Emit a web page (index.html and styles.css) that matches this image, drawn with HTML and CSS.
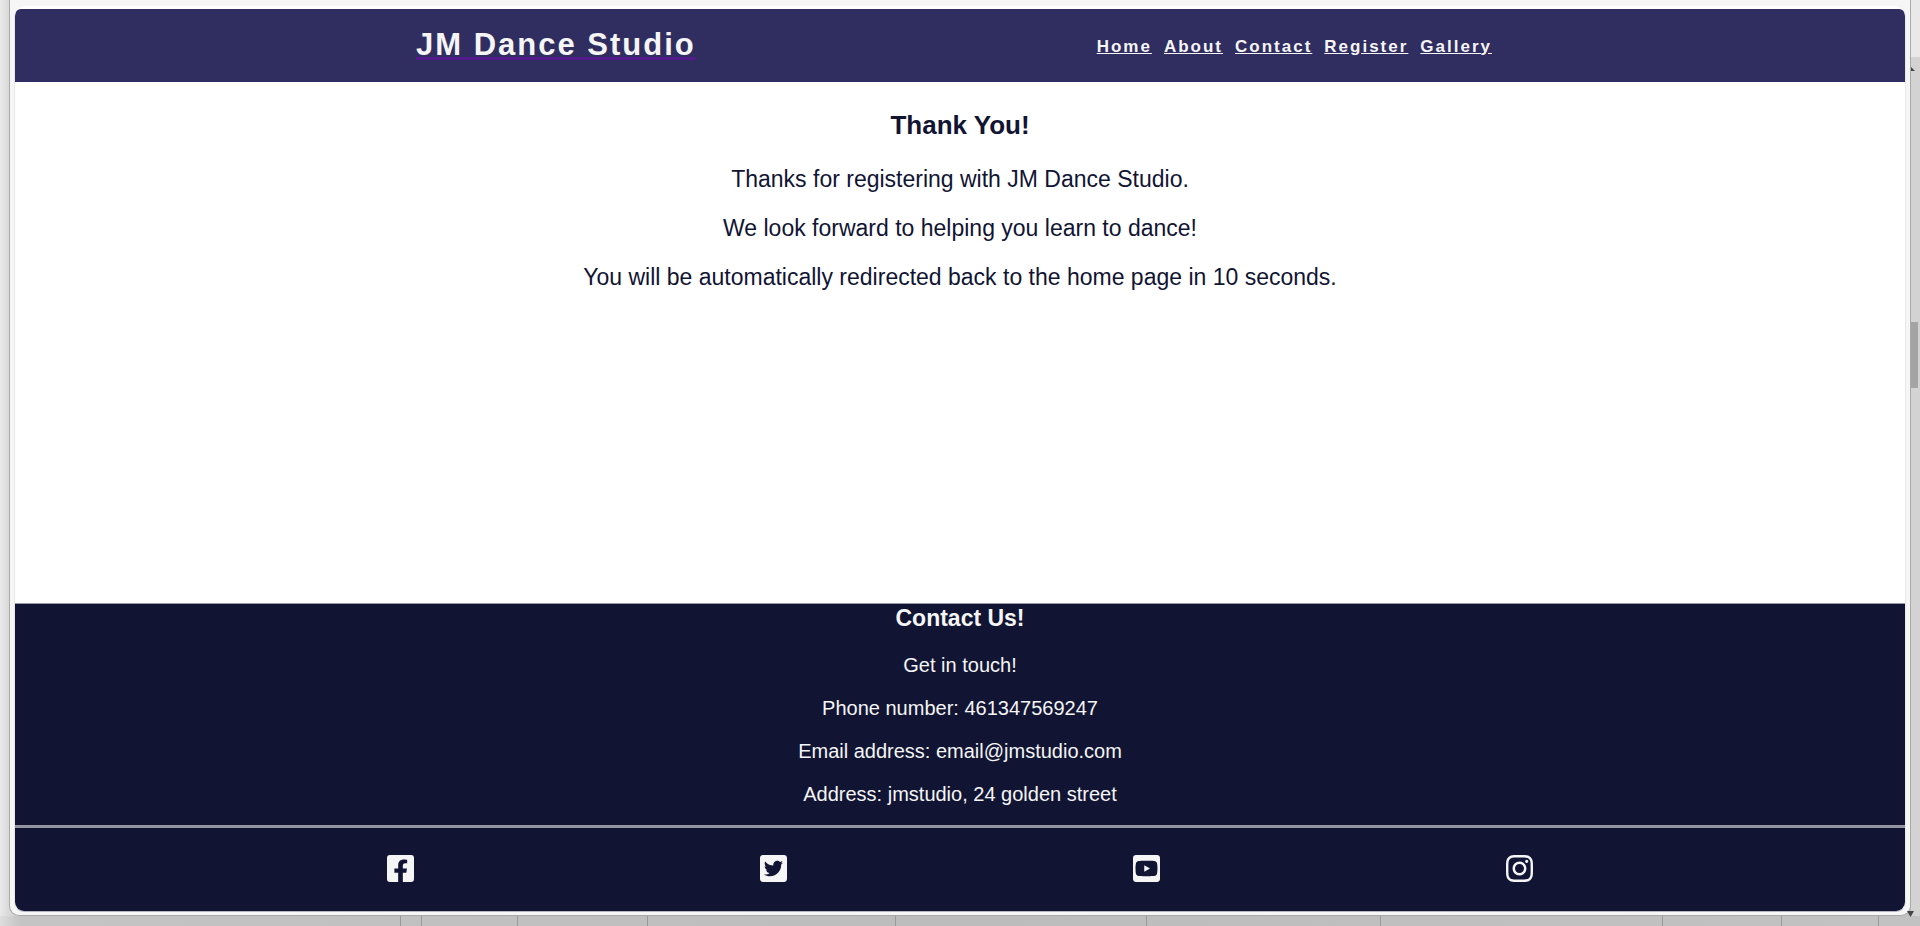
FILE: index.html
```html
<!DOCTYPE html>
<html lang="en">
<head>
<meta charset="utf-8">
<title>JM Dance Studio</title>
<link rel="stylesheet" href="styles.css">
</head>
<body>
<div class="desktop">
  <div class="stage">
    <div class="window">
      <div class="page">
        <header class="site-header">
          <a class="brand" href="#"><h1 class="brand-name">JM Dance Studio</h1></a>
          <nav class="site-nav">
            <ul class="nav-list">
              <li><a href="#">Home</a></li>
              <li><a href="#">About</a></li>
              <li><a href="#">Contact</a></li>
              <li><a href="#">Register</a></li>
              <li><a href="#">Gallery</a></li>
            </ul>
          </nav>
        </header>
        <main class="thanks">
          <h2>Thank You!</h2>
          <p>Thanks for registering with JM Dance Studio.</p>
          <p>We look forward to helping you learn to dance!</p>
          <p>You will be automatically redirected back to the home page in 10 seconds.</p>
        </main>
        <footer class="site-footer">
          <section class="contact">
            <h3>Contact Us!</h3>
            <p>Get in touch!</p>
            <p>Phone number: 461347569247</p>
            <p>Email address: email@jmstudio.com</p>
            <p>Address: jmstudio, 24 golden street</p>
          </section>
          <div class="social">
            <a href="#" aria-label="Facebook"><svg viewBox="0 32 448 448"><path d="M400 32H48A48 48 0 0 0 0 80v352a48 48 0 0 0 48 48h137.250V327.690h-63V256h63v-54.640c0-62.150 37-96.480 93.670-96.480 27.140 0 55.520 4.840 55.520 4.840v61h-31.270c-30.810 0-40.420 19.120-40.420 38.730V256h68.780l-11 71.690h-57.780V480H400a48 48 0 0 0 48-48V80a48 48 0 0 0-48-48z"/></svg></a>
            <a href="#" aria-label="Twitter"><svg viewBox="0 32 448 448"><path d="M400 32H48C21.500 32 0 53.500 0 80v352c0 26.500 21.500 48 48 48h352c26.500 0 48-21.500 48-48V80c0-26.500-21.500-48-48-48zm-48.900 158.800c.2 2.800.2 5.700.2 8.500 0 86.700-66 186.600-186.600 186.600-37.200 0-71.700-10.800-100.700-29.400 5.300.6 10.400.8 15.800.8 30.700 0 58.900-10.400 81.400-28-28.800-.6-53-19.500-61.300-45.500 10.100 1.500 19.200 1.500 29.600-1.200-30-6.100-52.500-32.500-52.500-64.400v-.8c8.700 4.900 18.900 7.900 29.600 8.300a65.447 65.447 0 0 1-29.200-54.600c0-12.200 3.200-23.400 8.900-33.100 32.300 39.800 80.800 65.800 135.200 68.600-9.300-44.500 24-80.600 64-80.600 18.900 0 35.900 7.900 47.900 20.700 14.800-2.800 29-8.300 41.600-15.800-4.900 15.200-15.200 28-28.800 36.100 13.200-1.400 26-5.100 37.800-10.200-8.900 13.100-20.100 24.700-32.900 34z"/></svg></a>
            <a href="#" aria-label="YouTube"><svg viewBox="0 32 448 448"><path d="M186.800 202.100l95.200 54.100-95.200 54.100V202.100zM448 80v352c0 26.500-21.500 48-48 48H48c-26.500 0-48-21.500-48-48V80c0-26.500 21.500-48 48-48h352c26.500 0 48 21.500 48 48zm-42 176.300s0-59.600-7.600-88.200c-4.200-15.800-16.500-28.200-32.200-32.400C337.900 128 224 128 224 128s-113.900 0-142.200 7.700c-15.700 4.200-28 16.600-32.200 32.400-7.600 28.500-7.600 88.200-7.600 88.200s0 59.600 7.600 88.200c4.200 15.800 16.500 27.700 32.200 31.900C110.100 384 224 384 224 384s113.900 0 142.200-7.700c15.700-4.200 28-16.100 32.200-31.900 7.600-28.500 7.600-88.100 7.600-88.100z"/></svg></a>
            <a href="#" aria-label="Instagram"><svg viewBox="0 32 448 448"><path d="M224.100 141c-63.600 0-114.900 51.300-114.900 114.900s51.300 114.900 114.900 114.900S339 319.500 339 255.900 287.700 141 224.100 141zm0 189.600c-41.100 0-74.700-33.500-74.700-74.700s33.500-74.700 74.700-74.700 74.700 33.500 74.700 74.700-33.600 74.700-74.700 74.700zm146.400-194.300c0 14.900-12 26.800-26.800 26.800-14.900 0-26.800-12-26.800-26.800s12-26.800 26.800-26.800 26.800 12 26.800 26.800zm76.100 27.200c-1.700-35.900-9.900-67.700-36.200-93.900-26.200-26.200-58-34.400-93.900-36.200-37-2.100-147.900-2.100-184.900 0-35.800 1.700-67.600 9.900-93.900 36.100s-34.400 58-36.200 93.900c-2.100 37-2.100 147.900 0 184.900 1.700 35.900 9.900 67.700 36.200 93.900s58 34.400 93.900 36.200c37 2.100 147.900 2.100 184.900 0 35.900-1.700 67.700-9.900 93.900-36.200 26.200-26.200 34.400-58 36.200-93.900 2.100-37 2.100-147.800 0-184.800zM398.800 388c-7.800 19.600-22.900 34.700-42.600 42.600-29.500 11.700-99.500 9-132.100 9s-102.700 2.600-132.100-9c-19.600-7.800-34.700-22.900-42.600-42.600-11.700-29.500-9-99.500-9-132.100s-2.600-102.700 9-132.100c7.800-19.600 22.900-34.700 42.600-42.600 29.500-11.700 99.500-9 132.100-9s102.700-2.600 132.100 9c19.600 7.800 34.700 22.900 42.600 42.600 11.700 29.500 9 99.500 9 132.100s2.700 102.700-9 132.100z"/></svg></a>
          </div>
        </footer>
      </div>
    </div>
    <div class="scroll" aria-hidden="true">
      <div class="scroll-cap"></div>
      <svg class="arrow-up" viewBox="0 0 4 4"><path d="M0 0L4 4H0z"/></svg>
      <div class="scroll-thumb"></div>
    </div>
  </div>
  <div class="sheet" aria-hidden="true">
    <i style="width:20.880%"></i><i style="width:1.090%"></i><i style="width:5.010%"></i><i style="width:6.780%"></i><i style="width:12.920%"></i><i style="width:13.080%"></i><i style="width:12.190%"></i><i style="width:14.690%"></i><i style="width:6.150%"></i><i style="width:5.100%"></i>
    <svg class="arrow-down" viewBox="0 0 7 6"><path d="M0 0H7L3.500 6z"/></svg>
  </div>
</div>
</body>
</html>
```
FILE: styles.css
```css
* { box-sizing: border-box; }

body {
  margin: 0;
  font-family: Arial, "Liberation Sans", sans-serif;
  background: #c2c2c2;
}

.desktop {
  display: flex;
  flex-direction: column;
  min-height: 100vh;
}

.stage {
  flex: 1;
  display: flex;
  padding-left: 9px;
  background: linear-gradient(90deg, #e9e9e9, #d9d9d9 9px, #c2c2c2 30px);
}

.window {
  flex: 1;
  display: flex;
  padding: 6px 4px 3px;
  background: #f6f6f6;
  border: 1px solid #a9a9a9;
  border-top: 0;
  border-radius: 0 0 10px 10px;
}

.page {
  flex: 1;
  display: flex;
  flex-direction: column;
  padding-top: 3px;
  border-left: 1px solid #e8e8e8;
  border-right: 1px solid #e8e8e8;
  border-bottom: 1px solid #b4b4bf;
  border-radius: 10px;
  overflow: hidden;
  background: #fff;
}

.site-header {
  display: flex;
  justify-content: space-evenly;
  align-items: center;
  height: 73px;
  background: #302d61;
  border-radius: 6px 6px 0 0;
}

.brand {
  padding-bottom: 2px;
  color: #551a8b;
}

.brand-name {
  margin: 0;
  font-size: 31px;
  line-height: 36px;
  letter-spacing: 2px;
  color: #f5f5f5;
}

.site-nav { padding-top: 2px; }

.nav-list {
  display: flex;
  margin: 0;
  padding: 0;
  list-style: none;
  font-size: 17px;
  font-weight: bold;
  letter-spacing: 2px;
}

.nav-list li { margin-right: 12px; }
.nav-list a { color: #f5f5f5; }

.thanks {
  flex: 1;
  padding-top: 28px;
  text-align: center;
  color: #111433;
}

.thanks h2 {
  margin: 0 0 26px;
  font-size: 26px;
  line-height: 30px;
}

.thanks p {
  margin: 0 0 22px;
  font-size: 23px;
  line-height: 27px;
}

.site-footer {
  background: #111433;
  color: #f5f5f5;
  border-top: 1px solid #9799a3;
}

.contact {
  padding-bottom: 19px;
  text-align: center;
  border-bottom: 3px solid #9395a2;
}

.contact h3 {
  margin: 0 0 22px;
  font-size: 23px;
  line-height: 28px;
}

.contact p {
  margin: 0 0 20px;
  font-size: 20px;
  line-height: 23px;
}

.contact p:last-child { margin: 0; }

.social {
  display: flex;
  justify-content: space-around;
  width: 79%;
  margin: 0 auto;
  padding: 27px 0 29px;
}

.social svg {
  display: block;
  width: 27px;
  height: 27px;
  fill: #f5f5f5;
}

.scroll {
  width: 9px;
  background: #d3d3d3;
}

.scroll-cap {
  height: 57px;
  background: #e9e9e9;
}

.arrow-up {
  display: block;
  width: 4px;
  height: 4px;
  margin-top: 10px;
  fill: #444;
}

.scroll-thumb {
  width: 7px;
  height: 66px;
  margin-top: 251px;
  background: #a4a4a4;
}

.sheet {
  position: relative;
  display: flex;
  height: 10px;
  background: linear-gradient(90deg, #dedede, #c4c4c4 20px, #bcbcbc 50%, #c2c2c2);
}

.sheet i { border-right: 1px solid #999; }

.arrow-down {
  position: absolute;
  right: 6px;
  bottom: 9px;
  width: 7px;
  height: 6px;
  fill: #444;
}
```
